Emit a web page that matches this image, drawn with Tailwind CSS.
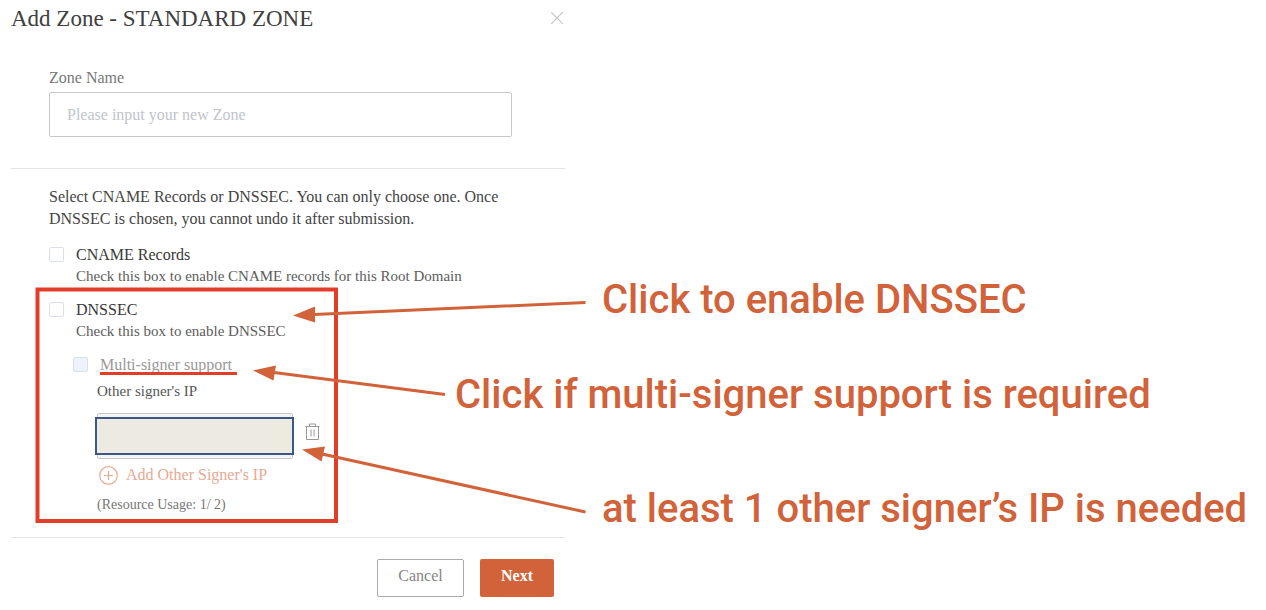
<!DOCTYPE html>
<html lang="en">
<head>
<meta charset="utf-8">
<title>Add Zone</title>
<script src="https://cdn.jsdelivr.net/npm/@tailwindcss/browser@4"></script>
</head>
<body class="relative bg-white font-['Liberation_Serif',serif] text-base leading-6 text-[#444]">
<main class="ml-[11px] max-w-[554px]">
  <header class="flex h-9 items-center justify-between">
    <h1 class="pt-0.5 text-[23px] leading-9 text-[#404040]">Add Zone - STANDARD ZONE</h1>
    <button type="button" aria-label="Close" class="p-0.5">
      <svg class="block size-3" viewBox="0 0 12 12" stroke="#c4c4c4" stroke-width="1.2" fill="none"><path d="M0 0L12 12M12 0L0 12"/></svg>
    </button>
  </header>

  <section class="border-b border-[#e4e4e4] pt-[30px] pr-[53px] pb-[31px] pl-[38px]">
    <label for="zone" class="mb-0.5 block text-[#777]">Zone Name</label>
    <input id="zone" type="text" placeholder="Please input your new Zone" class="block h-[45px] w-full rounded-xs border border-[#c8c8c8] px-[17px] placeholder:text-[#c0c4cc]">
  </section>

  <section class="border-b border-[#e4e4e4] pt-[17px] pb-5 pl-[38px]">
    <p class="max-w-[463px] leading-[22px] text-[#444]">Select CNAME Records or DNSSEC. You can only choose one. Once DNSSEC is chosen, you cannot undo it after submission.</p>
    <div class="mt-[13px] flex gap-3">
      <input id="cname" type="checkbox" class="mt-1 size-[15px] appearance-none rounded-xs border border-[#dcdfe9]">
      <div>
        <label for="cname" class="block text-[#383838]">CNAME Records</label>
        <p class="text-[15px] leading-[18px] text-[#5c5c5c]">Check this box to enable CNAME records for this Root Domain</p>
      </div>
    </div>
    <div class="mt-[13px] flex gap-3">
      <input id="dnssec" type="checkbox" class="mt-1 size-[15px] appearance-none rounded-xs border border-[#dcdfe9]">
      <div>
        <label for="dnssec" class="block text-[#383838]">DNSSEC</label>
        <p class="text-[15px] leading-[18px] text-[#5c5c5c]">Check this box to enable DNSSEC</p>
      </div>
    </div>
    <div class="mt-[13px] ml-6">
      <div class="flex gap-3">
        <input id="multi" type="checkbox" disabled class="mt-1 size-[15px] appearance-none rounded-xs border border-[#dcdfe9] bg-[#edf2fc]">
        <label for="multi" class="relative text-[#999]">Multi-signer support
          <svg class="absolute top-[19px] left-0 h-[3px] w-[137px]" viewBox="0 0 137 3"><path d="M0 0H137V3H0Z" fill="#e23d28"/></svg>
        </label>
      </div>
      <div class="ml-6">
        <label for="ip" class="mt-0.5 block text-[15px] leading-6 text-[#555]">Other signer's IP</label>
        <div class="mt-[10px] flex items-center gap-3">
          <div class="relative w-[196px] rounded-xs border border-[#c8c8c8] bg-[#f4f4f4] py-[3px]">
            <input id="ip" type="text" class="-mx-[3px] block h-[38px] w-[199px] border-2 border-[#3a5788] bg-[#edeae2] px-3">
          </div>
          <button type="button" aria-label="Delete signer" class="-mt-2">
            <svg class="block h-[18px] w-[15px]" viewBox="0 0 15 18" fill="none" stroke="#999" stroke-width="1"><path d="M0.5 3.5H14.5M4.500 3.500V1H10.500V3.500M1.500 3.500V16.500H13.500V3.500M6 6.500V13.500M9 6.500V13.500"/></svg>
          </button>
        </div>
        <button type="button" class="mt-1 ml-0.5 flex items-center gap-2 text-[#e9a891]">
          <svg class="block size-[19px]" viewBox="0 0 19 19" fill="none" stroke="#e9a891" stroke-width="1.2"><circle cx="9.5" cy="9.5" r="8.8"/><path d="M5 9.5H14M9.5 5V14"/></svg>
          Add Other Signer's IP
        </button>
        <p class="mt-1.5 text-sm leading-6 text-[#777]">(Resource Usage: 1/ 2)</p>
      </div>
    </div>
  </section>

  <footer class="flex justify-end gap-4 pt-[21px] pr-[11px]">
    <button type="button" class="h-[38px] w-[87px] rounded-xs border border-[#aaa] pb-1 text-[#858585]">Cancel</button>
    <button type="button" class="h-[38px] w-[74px] rounded-xs bg-[#d16239] pb-1 font-bold text-white">Next</button>
  </footer>
</main>

<svg class="pointer-events-none absolute top-0 left-0 h-[610px] w-[600px]" viewBox="0 0 600 610" fill="none">
  <rect x="37.5" y="289.5" width="298.500" height="231.500" stroke="#e23d28" stroke-width="4"/>
  <g stroke="#d16239" stroke-width="3"><path d="M585.500 302.500L314 314.500M445 394.500L274 372.500M585.500 512L322 454"/></g>
  <path fill="#d16239" d="M293 315.500L315 306.500V322.500ZM253 370.500L276 365.500L273.500 380.500ZM302 449.500L325 446.500L321.500 461.500Z"/>
</svg>
<p class="absolute top-[276px] left-[602px] font-['Roboto',sans-serif] text-[40px] leading-12 font-medium whitespace-nowrap text-[#d16239]">Click to enable DNSSEC</p>
<p class="absolute top-[371px] left-[455px] font-['Roboto',sans-serif] text-[40px] leading-12 font-medium whitespace-nowrap text-[#d16239]">Click if multi-signer support is required</p>
<p class="absolute top-[485px] left-[602px] font-['Roboto',sans-serif] text-[40px] leading-12 font-medium whitespace-nowrap text-[#d16239]">at least 1 other signer’s IP is needed</p>
</body>
</html>
